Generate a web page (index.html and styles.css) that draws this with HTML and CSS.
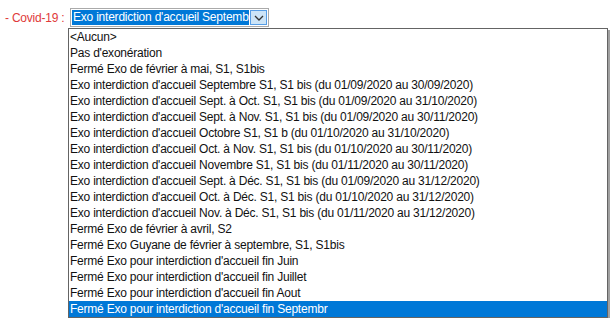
FILE: index.html
```html
<!DOCTYPE html>
<html lang="fr">
<head>
    <meta charset="UTF-8">
    <title>Covid-19</title>
    <link rel="stylesheet" href="styles.css">
</head>
<body>
    <div class="field">
        <label class="field-label">- Covid-19 :</label>
        <div class="combo">
            <div class="combo-value">Exo interdiction d'accueil Septembre S1, S1 bis</div>
            <div class="combo-button">
                <svg width="10" height="6" viewBox="0 0 10 6"><path d="M1 1 L5 5 L9 1" fill="none" stroke="#333" stroke-width="1.3"/></svg>
            </div>
        </div>
    </div>
    <ul class="list">
        <li>&lt;Aucun&gt;</li>
        <li>Pas d'exonération</li>
        <li>Fermé Exo de février à mai, S1, S1bis</li>
        <li>Exo interdiction d'accueil Septembre S1, S1 bis (du 01/09/2020 au 30/09/2020)</li>
        <li>Exo interdiction d'accueil Sept. à Oct. S1, S1 bis (du 01/09/2020 au 31/10/2020)</li>
        <li>Exo interdiction d'accueil Sept. à Nov. S1, S1 bis (du 01/09/2020 au 30/11/2020)</li>
        <li>Exo interdiction d'accueil Octobre S1, S1 b (du 01/10/2020 au 31/10/2020)</li>
        <li>Exo interdiction d'accueil Oct. à Nov. S1, S1 bis (du 01/10/2020 au 30/11/2020)</li>
        <li>Exo interdiction d'accueil Novembre S1, S1 bis (du 01/11/2020 au 30/11/2020)</li>
        <li>Exo interdiction d'accueil Sept. à Déc. S1, S1 bis (du 01/09/2020 au 31/12/2020)</li>
        <li>Exo interdiction d'accueil Oct. à Déc. S1, S1 bis (du 01/10/2020 au 31/12/2020)</li>
        <li>Exo interdiction d'accueil Nov. à Déc. S1, S1 bis (du 01/11/2020 au 31/12/2020)</li>
        <li>Fermé Exo de février à avril, S2</li>
        <li>Fermé Exo Guyane de février à septembre, S1, S1bis</li>
        <li>Fermé Exo pour interdiction d'accueil fin Juin</li>
        <li>Fermé Exo pour interdiction d'accueil fin Juillet</li>
        <li>Fermé Exo pour interdiction d'accueil fin Aout</li>
        <li class="selected">Fermé Exo pour interdiction d'accueil fin Septembr</li>
    </ul>
</body>
</html>
```

FILE: styles.css
```css
body {
    margin: 0;
    background-color: #fff;
    font-family: "Liberation Sans", Arial, sans-serif;
    font-size: 12px;
    letter-spacing: -0.22px;
    color: #111;
}

.field {
    display: flex;
    align-items: center;
    padding: 7px 0 0 5px;
    height: 21px;
}

.field-label {
    color: #e03a3a;
    width: 65px;
}

.combo {
    display: flex;
    width: 199px;
    height: 19px;
    border: 1px solid #aaa;
    box-sizing: border-box;
    padding: 1px;
    gap: 1px;
}

.combo-value {
    flex: 1;
    background-color: #0078d7;
    color: #fff;
    white-space: nowrap;
    overflow: hidden;
    line-height: 15px;
    padding-left: 1px;
}

.combo-button {
    width: 15px;
    background-color: #cce4f7;
    border: 1px solid #569de5;
    display: flex;
    align-items: center;
    justify-content: center;
}

.list {
    list-style: none;
    margin: 0 0 0 68px;
    padding: 0;
    width: 538px;
    border: 1px solid #646464;
    box-shadow: 2px 2px 0 #a0a0a0;
}

.list li {
    height: 16px;
    line-height: 16px;
    padding-left: 1px;
    white-space: nowrap;
}

.list li.selected {
    background-color: #0078d7;
    color: #fff;
}
```
